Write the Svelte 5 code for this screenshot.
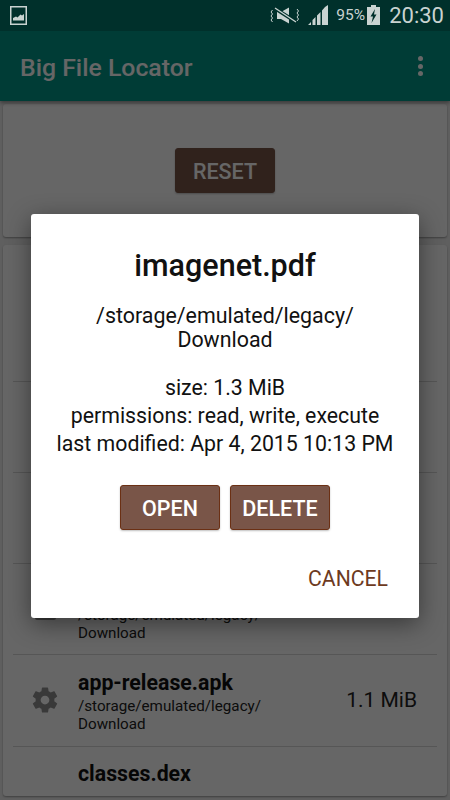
<script>
  const rows = [
    { name: '', path: [], size: '', icon: 'none' },
    { name: '', path: [], size: '', icon: 'none' },
    { name: 'imagenet.pdf', path: ['/storage/emulated/legacy/', 'Download'], size: '1.3 MiB', icon: 'doc' },
    { name: 'app-release.apk', path: ['/storage/emulated/legacy/', 'Download'], size: '1.1 MiB', icon: 'gear' },
    { name: 'classes.dex', path: [], size: '', icon: 'none' }
  ];
  const info = ['size: 1.3 MiB', 'permissions: read, write, execute', 'last modified: Apr 4, 2015 10:13 PM'];
</script>

<div class="page">
  <div class="status">
    <svg class="pic" viewBox="0 0 17 19" width="17" height="19">
      <rect x="0.75" y="0.75" width="15.5" height="17.5" fill="#00302b" stroke="#c9d3d1" stroke-width="1.5"/>
      <path d="M3 14.500v-2.500l3-1.500 1.500 1 3-3 1.500 1 2-1.500v6.500z" fill="#c9d3d1"/>
    </svg>
    <span class="status-fill"></span>
    <svg class="mute" viewBox="0 0 30 17" width="30" height="17">
      <path d="M7 5h4l8-4.500v16L11 12H7z" fill="#c9d3d1"/>
      <path d="M5 1.500l22 14" stroke="#00302b" stroke-width="3.600"/>
      <path d="M5 1l21 14" stroke="#c9d3d1" stroke-width="1.400"/>
      <path d="M2.500 3l-1.500 2 1.500 2-1.500 2 1.500 2-1.500 2 1.500 2M27 2l1.500 2-1.500 2 1.500 2-1.500 2 1.500 2-1.500 2" fill="none" stroke="#c9d3d1" stroke-width="1"/>
    </svg>
    <svg class="signal" viewBox="0 0 20 20" width="20" height="20">
      <path d="M0 20l3-3v3zM4.500 20v-5l3-3v8zM9 20V10.500l3.500-3.500V20zM14 20V5.500L17 2l3-2v20z" fill="#c9d3d1"/>
    </svg>
    <span class="pct">95%</span>
    <svg class="batt" viewBox="0 0 13 20" width="13" height="20">
      <path d="M4 0h5v2h4v18H0V2h4z" fill="#c9d3d1"/>
      <path d="M8 4L3.500 11.500h2.500L4.500 18 9.500 9.500H7z" fill="#00302b"/>
    </svg>
    <span class="time">20:30</span>
  </div>

  <header class="toolbar">
    <span class="app-title">Big File Locator</span>
    <span class="dots"><i></i><i></i><i></i></span>
  </header>

  <main class="content">
    <section class="card top">
      <button class="btn reset">RESET</button>
    </section>
    <section class="card list">
      <div class="list-head"></div>
      {#each rows as row}
        <div class="row">
          <div class="icon">
            {#if row.icon === 'gear'}
              <svg viewBox="0 0 24 24" width="30" height="30"><path fill="currentColor" d="M19.43 12.98c.04-.32.07-.64.07-.98s-.03-.66-.07-.98l2.11-1.65c.19-.15.24-.42.12-.64l-2-3.460c-.12-.22-.39-.3-.61-.22l-2.490 1c-.52-.4-1.08-.73-1.690-.98l-.38-2.650C14.460 2.180 14.250 2 14 2h-4c-.25 0-.46.18-.49.42l-.38 2.650c-.61.25-1.170.59-1.690.98l-2.490-1c-.23-.09-.49 0-.61.22l-2 3.460c-.13.22-.07.49.12.64l2.110 1.650c-.04.32-.07.65-.07.98s.03.66.07.98l-2.110 1.650c-.19.15-.24.42-.12.64l2 3.460c.12.22.39.3.61.22l2.490-1c.52.4 1.080.73 1.690.98l.38 2.650c.03.24.24.42.49.42h4c.25 0 .46-.18.49-.42l.38-2.650c.61-.25 1.170-.59 1.690-.98l2.490 1c.23.09.49 0 .61-.22l2-3.460c.12-.22.07-.49-.12-.64l-2.110-1.650zM12 15.500c-1.930 0-3.500-1.570-3.500-3.500s1.570-3.500 3.500-3.500 3.500 1.570 3.500 3.500-1.570 3.500-3.500 3.500z"/></svg>
            {:else if row.icon === 'doc'}
              <span class="doc"></span>
            {/if}
          </div>
          <div class="meta">
            <div class="name">{row.name}</div>
            {#each row.path as line}<div class="path">{line}</div>{/each}
          </div>
          <div class="size">{row.size}</div>
        </div>
      {/each}
    </section>
  </main>

  <div class="scrim">
    <div class="dialog">
      <h1>imagenet.pdf</h1>
      <p class="where">/storage/emulated/legacy/<br />Download</p>
      <div class="info">
        {#each info as line}<div>{line}</div>{/each}
      </div>
      <div class="actions">
        <button class="btn solid">OPEN</button>
        <button class="btn solid">DELETE</button>
      </div>
      <div class="foot"><button class="cancel">CANCEL</button></div>
    </div>
  </div>
</div>

<style>
  :global(body) { margin: 0; background: #eee; }
  .page {
    position: relative;
    width: 450px;
    height: 800px;
    overflow: hidden;
    display: flex;
    flex-direction: column;
    background: #eee;
    font-family: Roboto, "Liberation Sans", sans-serif;
    color: #000;
  }
  .status {
    position: relative;
    z-index: 3;
    flex: 0 0 31px;
    display: flex;
    align-items: center;
    padding: 0 6px 0 10px;
    background: #00302b;
    color: #c9d3d1;
  }
  .status-fill { flex: 1; }
  .mute { margin-top: -1px; }
  .signal { margin: -1px 0 0 8px; }
  .pct { margin: -1px 0 0 8px; font-size: 15.500px; width: 31px; }
  .batt { margin-top: -1px; }
  .time { margin: 0 0 0 9px; font-size: 22px; line-height: 31px; }

  .toolbar {
    flex: 0 0 70px;
    display: flex;
    align-items: center;
    justify-content: space-between;
    padding: 2px 27px 0 20px;
    box-sizing: border-box;
    background: #009688;
    color: #fff;
    box-shadow: 0 2px 4px rgba(0, 0, 0, .4);
    position: relative;
    z-index: 1;
  }
  .app-title { font-size: 24.800px; font-weight: 500; }
  .dots { display: flex; flex-direction: column; gap: 2.500px; margin-top: -2px; }
  .dots i { display: block; width: 5px; height: 5px; border-radius: 50%; background: #fff; }

  .content {
    flex: 1;
    min-height: 0;
    display: flex;
    flex-direction: column;
    gap: 8px;
    padding: 3px 3px 4px;
  }
  .card {
    background: #fff;
    border-radius: 3px;
    box-shadow: 0 1px 2px rgba(0, 0, 0, .35);
  }
  .top {
    flex: 0 0 133px;
    display: flex;
    align-items: center;
    justify-content: center;
  }
  .list { flex: 1; min-height: 0; overflow: hidden; padding: 0 10px; }
  .list-head { height: 137px; border-bottom: 1px solid #d8d8d8; box-sizing: border-box; }
  .row {
    box-sizing: border-box;
    height: 91.150px;
    display: flex;
    align-items: center;
    border-bottom: 1px solid #d8d8d8;
  }
  .row:last-child { border-bottom: 0; align-items: flex-start; padding-top: 12px; }
  .icon {
    flex: 0 0 65px;
    display: flex;
    justify-content: center;
    padding: 0 5px 0 4px;
    box-sizing: border-box;
    color: #8f8f8f;
  }
  .doc {
    box-sizing: border-box;
    display: block;
    width: 21px;
    height: 22px;
    border: 2px solid #8f8f8f;
    border-radius: 2px;
  }
  .meta { flex: 1; min-width: 0; padding-top: 2px; }
  .name { font-size: 21.300px; font-weight: 700; line-height: 25px; margin-bottom: 2px; color: #111; }
  .path { font-size: 15.200px; line-height: 18px; color: #222; }
  .size { padding-right: 20px; font-size: 21px; color: #222; }

  .btn {
    box-sizing: border-box;
    width: 100px;
    height: 45px;
    border: 1px solid #6b3014;
    border-radius: 3px;
    background: #795548;
    color: #fff;
    font-family: inherit;
    font-size: 21.500px;
    font-weight: 500;
    padding: 2px 0 0;
    box-shadow: 0 1px 2px rgba(0, 0, 0, .25);
  }
  .btn.reset { border-color: #795548; }

  .scrim {
    position: absolute;
    inset: 31px 0 0;
    z-index: 2;
    background: rgba(0, 0, 0, .6);
    display: flex;
    align-items: center;
    justify-content: center;
  }
  .dialog {
    box-sizing: border-box;
    width: 388px;
    height: 404px;
    padding: 34px 10px 0;
    background: #fff;
    border-radius: 3px;
    box-shadow: 0 6px 24px rgba(0, 0, 0, .45);
    text-align: center;
  }
  h1 { margin: 0; font-size: 30.500px; font-weight: 500; line-height: 36px; color: #111; }
  .where { margin: 20px 0 0; font-size: 21.400px; line-height: 24.500px; color: #111; }
  .info { margin-top: 21px; font-size: 21.300px; line-height: 28px; color: #111; white-space: nowrap; }
  .actions { margin-top: 27px; display: flex; justify-content: center; gap: 10px; }
  .foot { display: flex; justify-content: flex-end; margin-top: 33px; }
  .cancel {
    border: 0;
    background: none;
    padding: 0;
    margin-right: 21px;
    font-family: inherit;
    font-size: 21.200px;
    line-height: 32px;
    color: #6d3a1e;
  }
</style>
